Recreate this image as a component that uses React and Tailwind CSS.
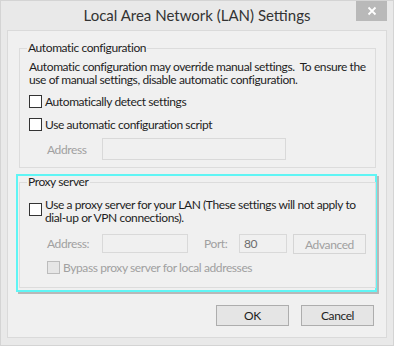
import React from 'react'

const FONT = { fontFamily: 'Lato, "Noto Sans", Arial, sans-serif' }

function Check({ disabled }) {
  return (
    <span
      className={
        'inline-block h-[13px] w-[13px] shrink-0 border ' +
        (disabled ? 'border-[#bcbcbc] bg-[#e6e6e6]' : 'border-[#333333] bg-white')
      }
    />
  )
}

function Box({ className, children }) {
  return (
    <div className={'flex shrink-0 items-center border border-[#d9d9d9] bg-[#f0f0f0] px-[4px] text-[#6d6d6d] ' + className}>
      {children}
    </div>
  )
}

export default function App() {
  return (
    <div
      className="flex h-[346px] w-[394px] flex-col whitespace-nowrap border border-[#d4d4d4] bg-[#e9e9e9] text-[12px] leading-[13px] tracking-[-0.4px] text-[#1e1e1e]"
      style={FONT}
    >
      {/* title bar */}
      <div className="flex h-[29px] shrink-0 items-start">
        <div className="flex-1 pt-[5px] pl-[37px] text-center text-[15px] leading-[18px] tracking-normal text-[#333333]">
          Local Area Network (LAN) Settings
        </div>
        <div className="mr-[6px] flex h-[20px] w-[31px] items-center justify-center bg-[#b9b9b9]">
          <svg width="10" height="10" viewBox="0 0 10 10">
            <path d="M1.5 1.5 L8.5 8.5 M8.5 1.5 L1.5 8.5" stroke="#fff" strokeWidth="1.8" />
          </svg>
        </div>
      </div>

      {/* client area */}
      <div className="mx-[6px] mb-[7px] flex flex-1 flex-col border border-[#dadada] bg-[#f0f0f0] px-[11px] pt-[9px]">
        <fieldset className="h-[128px] border border-[#dcdcdc] px-[9px]">
          <legend className="ml-[-2px] px-[1px] leading-[16px]">Automatic configuration</legend>
          <div className="mt-[4px]">
            Automatic configuration may override manual settings.&nbsp; To ensure the
            <br />
            use of manual settings, disable automatic configuration.
          </div>
          <div className="mt-[9px] flex items-center gap-[3px]">
            <Check />
            <span>Automatically detect settings</span>
          </div>
          <div className="mt-[10px] flex items-center gap-[3px]">
            <Check />
            <span>Use automatic configuration script</span>
          </div>
          <div className="mt-[7px] flex items-center">
            <span className="w-[73px] shrink-0 pl-[18px] text-[#a0a0a0]">Address</span>
            <Box className="h-[22px] w-[184px]" />
          </div>
        </fieldset>

        {/* highlighted proxy group */}
        <div className="mt-[6px] ml-[-3px] mr-[-2px] border-2 border-[#5ff5f5] px-[1px] pb-[2px] shadow-[2px_2px_0_#b8b8b8]">
          <fieldset className="h-[112px] border border-[#dcdcdc] px-[9px]">
            <legend className="ml-[-2px] px-[1px] leading-[12px]">Proxy server</legend>
            <div className="mt-[15px] flex items-start gap-[3px]">
              <Check />
              <span className="-mt-[5px]">
                Use a proxy server for your LAN (These settings will not apply to
                <br />
                dial-up or VPN connections).
              </span>
            </div>
            <div className="mt-[10px] flex items-start">
              <span className="h-[19px] w-[73px] shrink-0 pl-[18px] leading-[19px] text-[#a0a0a0]">Address:</span>
              <Box className="h-[19px] w-[86px]" />
              <span className="ml-[16px] w-[35px] shrink-0 leading-[19px] text-[#a0a0a0]">Port:</span>
              <Box className="h-[19px] w-[48px]">80</Box>
              <div className="ml-[6px] flex h-[20px] w-[73px] shrink-0 items-center justify-center border border-[#d5d5d5] bg-[#f0f0f0] text-[#a0a0a0]">
                Advanced
              </div>
            </div>
            <div className="mt-[7px] flex items-center gap-[3px] pl-[18px]">
              <Check disabled />
              <span className="text-[#a0a0a0]">Bypass proxy server for local addresses</span>
            </div>
          </fieldset>
        </div>

        <div className="mt-[13px] flex justify-end gap-[12px] pr-[1px]">
          <button className="h-[21px] w-[73px] border border-[#adadad] bg-[#e5e5e5] text-[#1e1e1e]">OK</button>
          <button className="h-[21px] w-[73px] border border-[#adadad] bg-[#e5e5e5] text-[#1e1e1e]">Cancel</button>
        </div>
      </div>
    </div>
  )
}
